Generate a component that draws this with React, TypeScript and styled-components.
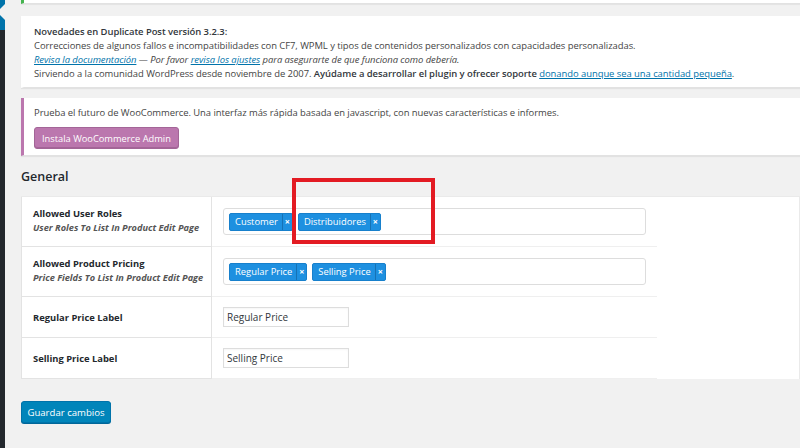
import React from "react";
import styled, {createGlobalStyle} from "styled-components";

const GlobalStyle = createGlobalStyle`
  html, body {
    margin: 0;
    padding: 0;
    background: #f1f1f1;
    font-family: "Open Sans", "Noto Sans", sans-serif;
    color: #444;
  }
`

const Page = styled.div`
  position: relative;
  display: flex;
  min-height: 448px;
  overflow: hidden;
`

const Sidebar = styled.div`
  position: relative;
  width: 5px;
  flex-shrink: 0;
  background: #23282d;
`

const ActiveItem = styled.div`
  position: relative;
  height: 30px;
  background: #0073aa;
  &:after {
    content: "";
    position: absolute;
    right: 0;
    top: 4px;
    border: 8px solid transparent;
    border-right-color: #f1f1f1;
  }
`

const Main = styled.div`
  flex: 1;
  padding-left: 16px;
  min-width: 0;
`

const Notice = styled.div<{ accent?: string }>`
  background: #fff;
  border-left: 3px solid ${p => p.accent || '#fff'};
  box-shadow: 0 1px 1px rgba(0, 0, 0, .06);
  border-bottom: 1px solid #e2e2e2;
  padding: ${p => p.accent ? '8px 12px 6px 10px' : '9px 12px 6px 10px'};
  margin-bottom: 10px;
  font-size: 9.45px;
  line-height: 14px;
  letter-spacing: -0.05px;
`

const TopNotice = styled(Notice)`
  height: 3px;
  padding: 0;
  margin-top: 0;
  margin-bottom: 12px;
`

const Line = styled.p`
  margin: 0;
  white-space: nowrap;
`

const Title = styled(Line)`
  font-weight: 600;
  color: #32373c;
  margin-bottom: 0;
`

const Link = styled.a`
  color: #0073aa;
  text-decoration: underline;
`

const Em = styled.span`
  font-style: italic;
`

const Strong = styled.span`
  font-weight: 600;
  color: #32373c;
`

const WooButton = styled.button`
  display: block;
  margin: 7px 0 0;
  height: 22px;
  padding: 0 7px;
  background: #bb77ae;
  border: 1px solid #a36597;
  box-shadow: inset 0 -1px 0 #a36597;
  border-radius: 3px;
  color: #fff;
  font-family: inherit;
  font-size: 9.3px;
`

const SectionTitle = styled.h2`
  margin: 13px 0 11px;
  font-size: 12.5px;
  font-weight: 600;
  color: #23282d;
  line-height: 16px;
`

const FormTable = styled.div`
  display: grid;
  grid-template-columns: 191px 445px;
  background: #fff;
  border-top: 1px solid #eaeaea;
  border-right: 1px solid #eaeaea;
`

const Th = styled.div<{ h: number }>`
  height: ${p => p.h}px;
  box-sizing: border-box;
  border: 1px solid #e3e3e3;
  border-top-width: 0;
  padding: ${p => p.h > 45 ? '9px 11px' : '0 11px'};
  display: flex;
  flex-direction: column;
  justify-content: ${p => p.h > 45 ? 'flex-start' : 'center'};
`

const Td = styled.div<{ h: number }>`
  height: ${p => p.h}px;
  box-sizing: border-box;
  border-bottom: 1px solid #efefef;
  padding: 0 11px;
  display: flex;
  align-items: center;
`

const Label = styled.div`
  font-size: 9.4px;
  font-weight: 700;
  color: #23282d;
  line-height: 15px;
  white-space: nowrap;
`

const Desc = styled.div`
  font-size: 9.2px;
  font-weight: 700;
  font-style: italic;
  color: #555;
  line-height: 14px;
  white-space: nowrap;
`

const Select = styled.div`
  flex: 1;
  height: 27px;
  box-sizing: border-box;
  border: 1px solid #ddd;
  border-radius: 3px;
  display: flex;
  align-items: center;
  gap: 5px;
  padding: 0 5px;
`

const Tag = styled.div`
  display: flex;
  height: 18px;
  background: #1e90e0;
  border: 1px solid #1780cc;
  border-radius: 2px;
  box-sizing: border-box;
  color: #fff;
  font-size: 9.4px;
`

const TagText = styled.span`
  padding: 0 4px 0 5px;
  line-height: 16px;
  white-space: nowrap;
`

const TagRemove = styled.span`
  width: 9px;
  border-left: 1px solid #1672b5;
  display: flex;
  align-items: center;
  justify-content: center;
  font-size: 9px;
  font-weight: 700;
  line-height: 16px;
`

const TextInput = styled.input<{ offset?: number }>`
  width: 126px;
  height: 20px;
  box-sizing: border-box;
  border: 1px solid #ddd;
  box-shadow: inset 0 1px 2px rgba(0, 0, 0, .04);
  padding: 0 3px;
  font-family: inherit;
  font-size: 10px;
  color: #32373c;
`

const SaveButton = styled.button`
  margin-top: 22px;
  height: 22px;
  width: 90px;
  padding: 0;
  background: #0085ba;
  border: 1px solid #0073aa;
  box-shadow: 0 1px 0 #006799;
  border-radius: 3px;
  color: #fff;
  font-family: inherit;
  font-size: 9.6px;
`

const Highlight = styled.div`
  position: absolute;
  left: 292px;
  top: 178px;
  width: 143px;
  height: 66px;
  box-sizing: border-box;
  border: 4px solid #e31b23;
  pointer-events: none;
`

const Tags: React.FC<{ items: string[] }> = ({items}) => (
    <Select>
        {items.map(i => <Tag key={i}>
            <TagText>{i}</TagText>
            <TagRemove>×</TagRemove>
        </Tag>)}
    </Select>
)

export default function App() {
    return <>
        <GlobalStyle/>
        <Page>
            <Sidebar>
                <ActiveItem/>
            </Sidebar>
            <Main>
                <TopNotice accent="#46b450"/>
                <Notice>
                    <Title>Novedades en Duplicate Post versión 3.2.3:</Title>
                    <Line>Correcciones de algunos fallos e incompatibilidades con CF7, WPML y tipos de contenidos personalizados con capacidades personalizadas.</Line>
                    <Line><Em><Link>Revisa la documentación</Link> — Por favor <Link>revisa los ajustes</Link> para asegurarte de que funciona como debería.</Em></Line>
                    <Line>Sirviendo a la comunidad WordPress desde noviembre de 2007. <Strong>Ayúdame a desarrollar el plugin y ofrecer soporte</Strong> <Link>donando aunque sea una cantidad pequeña</Link>.</Line>
                </Notice>
                <Notice accent="#bb77ae">
                    <Line>Prueba el futuro de WooCommerce. Una interfaz más rápida basada en javascript, con nuevas características e informes.</Line>
                    <WooButton>Instala WooCommerce Admin</WooButton>
                </Notice>
                <SectionTitle>General</SectionTitle>
                <FormTable>
                    <Th h={50}>
                        <Label>Allowed User Roles</Label>
                        <Desc>User Roles To List In Product Edit Page</Desc>
                    </Th>
                    <Td h={50}><Tags items={['Customer', 'Distribuidores']}/></Td>
                    <Th h={50}>
                        <Label>Allowed Product Pricing</Label>
                        <Desc>Price Fields To List In Product Edit Page</Desc>
                    </Th>
                    <Td h={50}><Tags items={['Regular Price', 'Selling Price']}/></Td>
                    <Th h={41}>
                        <Label>Regular Price Label</Label>
                    </Th>
                    <Td h={41}><TextInput defaultValue="Regular Price"/></Td>
                    <Th h={41}>
                        <Label>Selling Price Label</Label>
                    </Th>
                    <Td h={41}><TextInput defaultValue="Selling Price"/></Td>
                </FormTable>
                <SaveButton>Guardar cambios</SaveButton>
            </Main>
            <Highlight/>
        </Page>
    </>
}
